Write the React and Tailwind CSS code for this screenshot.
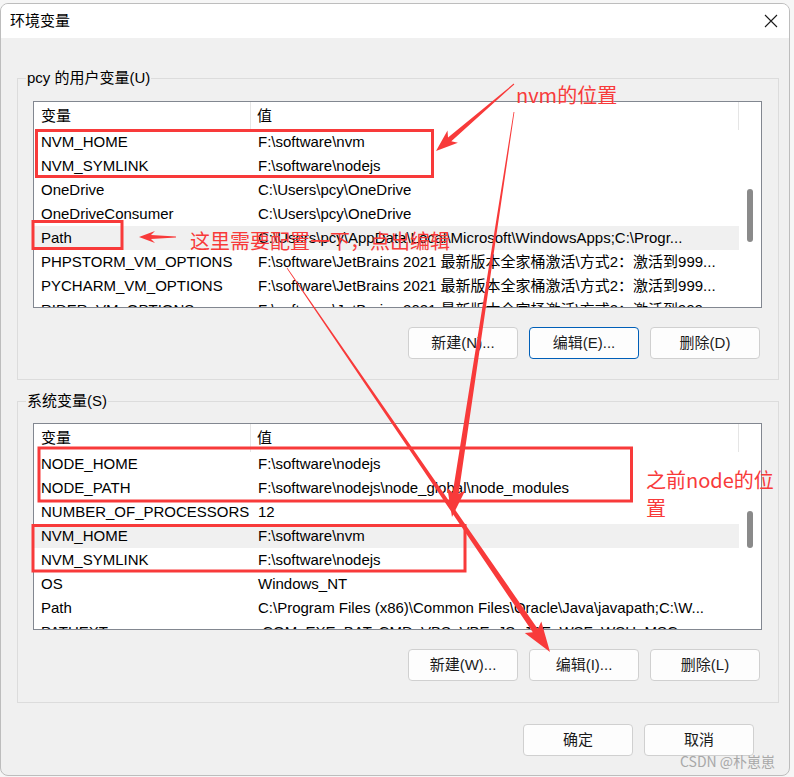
import React from 'react';

const font = { fontFamily: '"Liberation Sans", "Noto Sans CJK SC", sans-serif' };
const cjk = { fontFamily: '"Noto Sans CJK SC", "Liberation Sans", sans-serif' };

const userVars = [
  { name: 'NVM_HOME', value: 'F:\\software\\nvm' },
  { name: 'NVM_SYMLINK', value: 'F:\\software\\nodejs' },
  { name: 'OneDrive', value: 'C:\\Users\\pcy\\OneDrive' },
  { name: 'OneDriveConsumer', value: 'C:\\Users\\pcy\\OneDrive' },
  { name: 'Path', value: 'C:\\Users\\pcy\\AppData\\Local\\Microsoft\\WindowsApps;C:\\Progr...', selected: true },
  { name: 'PHPSTORM_VM_OPTIONS', value: 'F:\\software\\JetBrains 2021 最新版本全家桶激活\\方式2：激活到999...' },
  { name: 'PYCHARM_VM_OPTIONS', value: 'F:\\software\\JetBrains 2021 最新版本全家桶激活\\方式2：激活到999...' },
  { name: 'RIDER_VM_OPTIONS', value: 'F:\\software\\JetBrains 2021 最新版本全家桶激活\\方式2：激活到999...' },
];

const sysVars = [
  { name: 'NODE_HOME', value: 'F:\\software\\nodejs' },
  { name: 'NODE_PATH', value: 'F:\\software\\nodejs\\node_global\\node_modules' },
  { name: 'NUMBER_OF_PROCESSORS', value: '12' },
  { name: 'NVM_HOME', value: 'F:\\software\\nvm', selected: true },
  { name: 'NVM_SYMLINK', value: 'F:\\software\\nodejs' },
  { name: 'OS', value: 'Windows_NT' },
  { name: 'Path', value: 'C:\\Program Files (x86)\\Common Files\\Oracle\\Java\\javapath;C:\\W...' },
  { name: 'PATHEXT', value: '.COM;.EXE;.BAT;.CMD;.VBS;.VBE;.JS;.JSE;.WSF;.WSH;.MSC' },
];

// tapered arrow polygon, like the snipping tool draws
function arrowPoints(x1, y1, x2, y2, w0, w1, hl, hw) {
  const L = Math.hypot(x2 - x1, y2 - y1);
  const dx = (x2 - x1) / L;
  const dy = (y2 - y1) / L;
  const nx = -dy;
  const ny = dx;
  const bx = x2 - dx * hl;
  const by = y2 - dy * hl;
  const wx = bx - dx * 4;
  const wy = by - dy * 4;
  const p = [
    [x1 + (nx * w0) / 2, y1 + (ny * w0) / 2],
    [bx + (nx * w1) / 2, by + (ny * w1) / 2],
    [wx + (nx * hw) / 2, wy + (ny * hw) / 2],
    [x2, y2],
    [wx - (nx * hw) / 2, wy - (ny * hw) / 2],
    [bx - (nx * w1) / 2, by - (ny * w1) / 2],
    [x1 - (nx * w0) / 2, y1 - (ny * w0) / 2],
  ];
  return p.map((q) => q[0].toFixed(1) + ',' + q[1].toFixed(1)).join(' ');
}

function VarList({ rows, thumb }) {
  return (
    <div className="w-[729px] h-[207px] border border-[#828790] bg-white flex overflow-hidden">
      <div className="w-[705px] flex flex-col">
        <div className="h-[28px] flex items-center text-[15px] text-black shrink-0">
          <div className="w-[217px] h-full border-r border-[#e5e5e5] pl-[7px] flex items-center">变量</div>
          <div className="flex-1 h-full border-r border-[#e5e5e5] pl-[6px] flex items-center">值</div>
        </div>
        {rows.map((r) => (
          <div
            key={r.name}
            className={`h-[24px] shrink-0 flex items-center text-[15px] text-black whitespace-nowrap ${r.selected ? 'bg-[#f0f0f0]' : ''}`}
          >
            <div className="w-[217px] pl-[7px] overflow-hidden">{r.name}</div>
            <div className="flex-1 pl-[7px] overflow-hidden">{r.value}</div>
          </div>
        ))}
      </div>
      <div className="w-[22px] flex justify-center">
        <div className={`w-[6px] mt-[87px] rounded-[3px] bg-[#8a8a8a] ${thumb}`} />
      </div>
    </div>
  );
}

function Btn({ children, focused }) {
  return (
    <div
      className={`w-[110px] h-[32px] rounded-[4px] border bg-[#fdfdfd] flex items-center justify-center text-[15px] text-[#1b1b1b] ${
        focused ? 'border-[#005fb8]' : 'border-[#d0d0d0]'
      }`}
    >
      {children}
    </div>
  );
}

function Group({ label, children, className }) {
  return (
    <div className={`relative w-[762px] h-[302px] border border-[#dcdcdc] pl-[15px] ${className}`}>
      <div className="absolute left-[8px] -top-[11px] px-[1px] bg-[#f0f0f0] text-[15px] leading-[20px] text-black">
        {label}
      </div>
      {children}
    </div>
  );
}

export default function App() {
  const red = '#f83a3a';
  return (
    <div className="relative w-[794px] h-[777px] bg-[#f6f6f6] pt-[3px] overflow-hidden" style={font}>
      <div className="w-[790px] h-[773px] rounded-[8px] border border-[#bdbdbd] bg-[#f0f0f0] flex flex-col overflow-hidden">
        <div className="h-[34px] bg-white flex items-center justify-between pl-[9px] pr-[11px] shrink-0">
          <span className="text-[15px] text-black">环境变量</span>
          <svg width="14" height="14" viewBox="0 0 14 14">
            <path d="M1 1 L13 13 M13 1 L1 13" stroke="#1a1a1a" strokeWidth="1.1" />
          </svg>
        </div>

        <div className="pl-[16px] flex flex-col">
          <Group label="pcy 的用户变量(U)" className="mt-[40px] pt-[22px]">
            <VarList rows={userVars} thumb="h-[53px]" />
            <div className="w-[729px] flex justify-end gap-[11px] pr-[2px] mt-[19px]">
              <Btn>新建(N)...</Btn>
              <Btn focused>编辑(E)...</Btn>
              <Btn>删除(D)</Btn>
            </div>
          </Group>

          <Group label="系统变量(S)" className="mt-[21px] pt-[21px]">
            <VarList rows={sysVars} thumb="h-[37px]" />
            <div className="w-[729px] flex justify-end gap-[11px] pr-[2px] mt-[19px]">
              <Btn>新建(W)...</Btn>
              <Btn>编辑(I)...</Btn>
              <Btn>删除(L)</Btn>
            </div>
          </Group>

          <div className="w-[762px] flex justify-end gap-[11px] pr-[25px] mt-[21px]">
            <Btn>确定</Btn>
            <Btn>取消</Btn>
          </div>
        </div>
      </div>

      {/* red annotations drawn over the screenshot */}
      <svg className="absolute inset-0 pointer-events-none" width="794" height="777">
        <g fill="none" stroke={red} strokeWidth="3">
          <rect x="36.5" y="130.5" width="396" height="46" />
          <rect x="33" y="221.5" width="89" height="27" />
          <rect x="39" y="448" width="592.5" height="53" />
          <rect x="33" y="525.5" width="432" height="45.5" />
        </g>
        <g fill={red}>
          <polygon points={arrowPoints(514, 84, 436, 151, 1, 5, 18, 16)} />
          <polygon points={arrowPoints(514, 112, 452, 517, 0.8, 6, 24, 18)} />
          <polygon points={arrowPoints(287, 268, 550, 652, 0.8, 6, 26, 20)} />
          <polygon points={arrowPoints(176, 237, 139, 237, 1, 4, 12, 12)} />
        </g>
      </svg>

      <div className="absolute left-[516px] top-[82px] text-[20px] leading-[26px] text-[#f83a3a]" style={cjk}>
        nvm的位置
      </div>
      <div className="absolute left-[190px] top-[228px] text-[20px] leading-[26px] text-[#f83a3a] whitespace-nowrap" style={cjk}>
        这里需要配置一下，点出编辑
      </div>
      <div className="absolute left-[646px] top-[466px] w-[134px] text-[20px] leading-[28px] text-[#f83a3a]" style={cjk}>
        之前node的位置
      </div>
      <div className="absolute left-[680px] top-[751px] text-[14px] text-[#a8a8a8]" style={cjk}>
        CSDN @朴崽崽
      </div>
    </div>
  );
}
